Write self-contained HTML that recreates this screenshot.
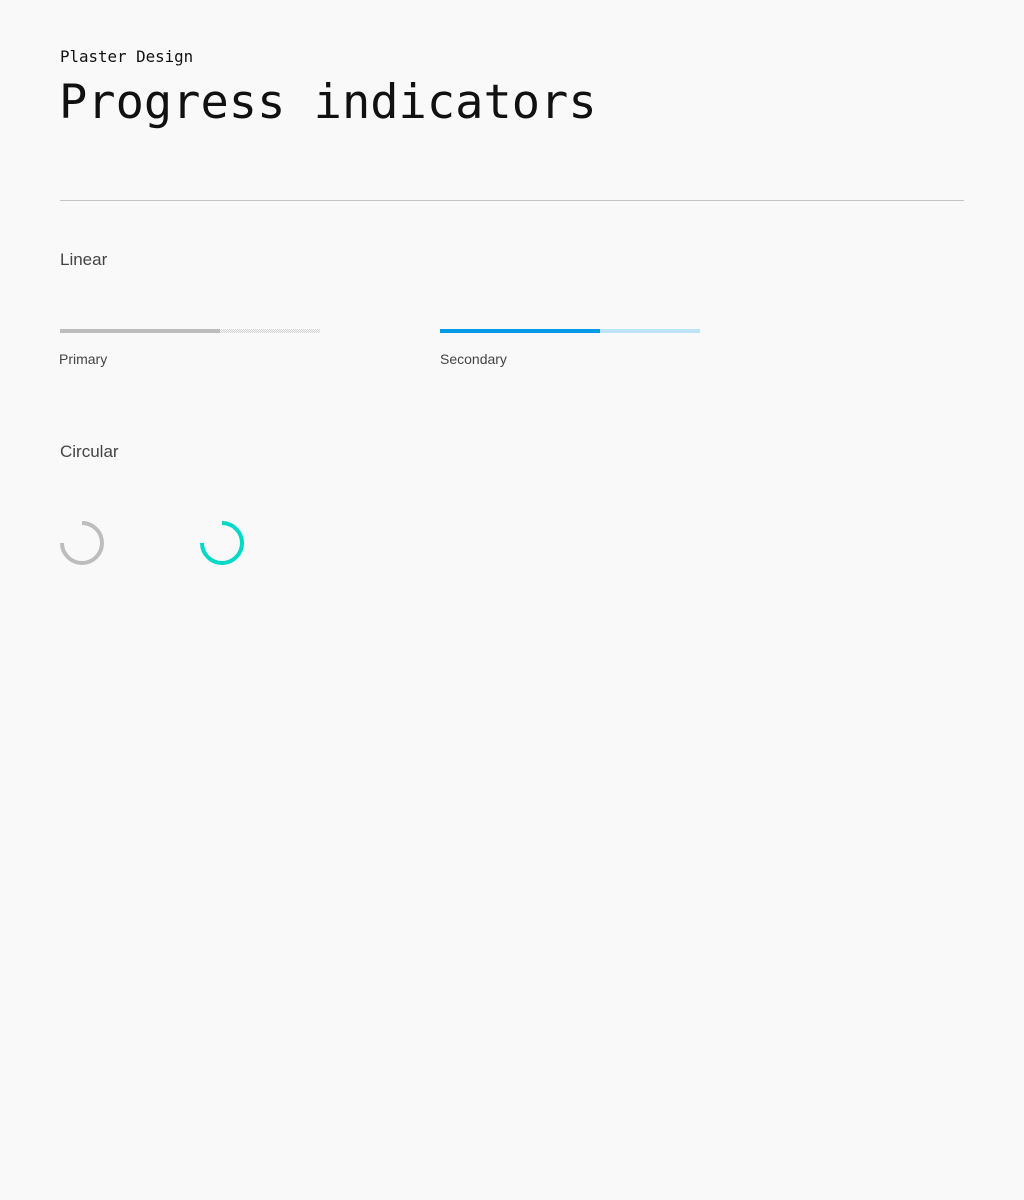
<!DOCTYPE html>
<html><head><meta charset="utf-8"><style>
html,body{margin:0;padding:0;background:#f9f9f9;width:1024px;height:1200px;overflow:hidden}
body{position:relative;font-family:"Liberation Sans",sans-serif}
.a{position:absolute}
.mono{font-family:"DejaVu Sans Mono",monospace;color:#111}
</style></head><body>
<div class="a mono" style="left:60px;top:47px;font-size:15.8px;line-height:20px">Plaster Design</div>
<div class="a mono" style="left:59px;top:74px;font-size:47px;line-height:58px">Progress indicators</div>
<div class="a" style="left:60px;top:200px;width:904px;height:1px;background:#c4c4c4"></div>
<div class="a" style="left:60px;top:250px;font-size:17px;color:#444;line-height:20px">Linear</div>
<div class="a" style="left:60px;top:329px;width:160px;height:4px;background:#bdbdbd"></div>
<div class="a" style="left:220px;top:329px;width:100px;height:4px;background-color:#f4f4f4;background-image:repeating-conic-gradient(#d6d6d6 0 25%,#f4f4f4 0 50%);background-size:2px 2px"></div>
<div class="a" style="left:59px;top:351px;font-size:14px;color:#444;line-height:16px">Primary</div>
<div class="a" style="left:440px;top:329px;width:160px;height:4px;background:#039be5"></div>
<div class="a" style="left:600px;top:329px;width:100px;height:4px;background:#bde4f4"></div>
<div class="a" style="left:440px;top:351px;font-size:14px;color:#444;line-height:16px">Secondary</div>
<div class="a" style="left:60px;top:442px;font-size:17px;color:#444;line-height:20px">Circular</div>
<svg class="a" style="left:58px;top:519px" width="48" height="48" viewBox="0 0 48 48">
<path d="M24 4 A20 20 0 1 1 4 24" fill="none" stroke="#bdbdbd" stroke-width="4"/></svg>
<svg class="a" style="left:198px;top:519px" width="48" height="48" viewBox="0 0 48 48">
<path d="M24 4 A20 20 0 1 1 4 24" fill="none" stroke="#00d8c8" stroke-width="4"/></svg>
</body></html>
